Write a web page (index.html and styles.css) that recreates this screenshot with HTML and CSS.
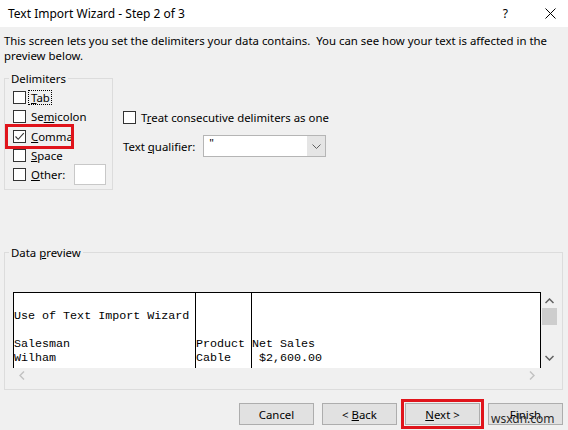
FILE: index.html
```html
<!DOCTYPE html>
<html lang="en">
<head>
    <meta charset="UTF-8">
    <title>Text Import Wizard - Step 2 of 3</title>
    <link rel="stylesheet" href="styles.css">
</head>
<body>

    <!-- Title bar -->
    <header class="titlebar">
        <span class="title">Text Import Wizard - Step 2 of 3</span>
        <div class="title-buttons">
            <span class="help">?</span>
            <svg class="close" width="11" height="11" viewBox="0 0 11 11"><path d="M0.5 0.5 L10.5 10.5 M10.5 0.5 L0.5 10.5" stroke="#000" stroke-width="1" fill="none"/></svg>
        </div>
    </header>

    <div class="dialog">
        <p class="intro">This screen lets you set the delimiters your data contains.&nbsp; You can see how your text is affected in the preview below.</p>

        <div class="top-row">
            <!-- Delimiters group -->
            <fieldset class="delimiters">
                <legend>Delimiters</legend>
                <label class="check-row"><span class="box"></span><span class="focus"><u>T</u>ab</span></label>
                <label class="check-row"><span class="box"></span><span>Se<u>m</u>icolon</span></label>
                <label class="check-row marked"><span class="box"><svg width="11" height="11" viewBox="0 0 11 11"><path d="M1.5 5.5 L4.2 8.3 L9.8 2.2" stroke="#333" stroke-width="1.1" fill="none"/></svg></span><span><u>C</u>omma</span></label>
                <label class="check-row"><span class="box"></span><span><u>S</u>pace</span></label>
                <label class="check-row"><span class="box"></span><span><u>O</u>ther:</span><span class="other-input"></span></label>
            </fieldset>

            <div class="options">
                <label class="check-row"><span class="box"></span><span>T<u>r</u>eat consecutive delimiters as one</span></label>
                <div class="qualifier">
                    <span>Text <u>q</u>ualifier:</span>
                    <div class="combo">
                        <span class="combo-value">"</span>
                        <span class="combo-btn"><svg width="9" height="5" viewBox="0 0 9 5"><path d="M0.5 0.5 L4.5 4.5 L8.5 0.5" stroke="#606060" fill="none"/></svg></span>
                    </div>
                </div>
            </div>
        </div>

        <!-- Data preview group -->
        <fieldset class="preview">
            <legend>Data <u>p</u>review</legend>
            <div class="preview-area">
                <div class="grid">
                    <div class="col col-1">
                        <div class="line"></div>
                        <div class="line">Use of Text Import Wizard</div>
                        <div class="line"></div>
                        <div class="line">Salesman</div>
                        <div class="line">Wilham</div>
                    </div>
                    <div class="col col-2">
                        <div class="line"></div>
                        <div class="line"></div>
                        <div class="line"></div>
                        <div class="line">Product</div>
                        <div class="line">Cable</div>
                    </div>
                    <div class="col col-3">
                        <div class="line"></div>
                        <div class="line"></div>
                        <div class="line"></div>
                        <div class="line">Net Sales</div>
                        <div class="line"> $2,600.00</div>
                    </div>
                </div>
                <div class="vscroll">
                    <svg width="9" height="6" viewBox="0 0 9 6"><path d="M0.5 5 L4.5 1 L8.5 5" stroke="#606060" stroke-width="1.5" fill="none"/></svg>
                    <div class="thumb"></div>
                    <svg class="down" width="9" height="6" viewBox="0 0 9 6"><path d="M0.5 1 L4.5 5 L8.5 1" stroke="#606060" stroke-width="1.5" fill="none"/></svg>
                </div>
            </div>
            <div class="hscroll">
                <svg width="6" height="9" viewBox="0 0 6 9"><path d="M5 0.5 L1 4.5 L5 8.5" stroke="#c2c2c2" stroke-width="1.5" fill="none"/></svg>
                <svg width="6" height="9" viewBox="0 0 6 9"><path d="M1 0.5 L5 4.5 L1 8.5" stroke="#c2c2c2" stroke-width="1.5" fill="none"/></svg>
            </div>
        </fieldset>

        <!-- Buttons -->
        <div class="buttons">
            <button>Cancel</button>
            <button>&lt; <u>B</u>ack</button>
            <button class="marked-btn"><u>N</u>ext &gt;</button>
            <button class="finish">Finish<span class="watermark">wsxdn.com</span></button>
        </div>
    </div>

</body>
</html>
```

FILE: styles.css
```css
body {
    margin: 0;
    width: 568px;
    height: 430px;
    overflow: hidden;
    background-color: #f0f0f0;
    font-family: "Noto Sans", sans-serif;
    font-size: 11.4px;
    color: #000;
}

u {
    text-decoration-thickness: 1px;
    text-underline-offset: 1px;
}

.titlebar {
    height: 27px;
    background-color: #fff;
    display: flex;
    justify-content: space-between;
    align-items: center;
    padding: 0 12px 0 8px;
}

.title {
    font-size: 12px;
}

.title-buttons {
    display: flex;
    align-items: center;
    gap: 37px;
}

.help {
    font-size: 12px;
}

.dialog {
    padding: 0 5px 0 4px;
}

.intro {
    margin: 6px 0 0 0;
    line-height: 15px;
}

.top-row {
    display: flex;
    margin-top: 8px;
}

fieldset {
    border: 1px solid #dcdcdc;
    margin: 0;
}

legend {
    padding: 0 2px;
    margin-left: -4px;
    line-height: 15px;
}

.delimiters {
    width: 109px;
    height: 119px;
    padding: 2px 0 0 8px;
    box-sizing: border-box;
}

.check-row {
    display: flex;
    align-items: center;
    height: 19.3px;
    gap: 5px;
}

.box {
    width: 11px;
    height: 11px;
    border: 1px solid #333;
    background-color: #fff;
    flex-shrink: 0;
    display: flex;
}

.focus {
    outline: 1px dotted #000;
    margin-left: -2px;
    padding: 0 1px 0 2px;
    line-height: 13px;
}

.marked {
    width: 57px;
    outline: 3px solid #e0141b;
    outline-offset: 1px;
    margin-left: -4px;
    padding-left: 4px;
    height: 17.3px;
    margin-top: 1px;
    margin-bottom: 1px;
}

.other-input {
    width: 30px;
    height: 19px;
    background-color: #fff;
    border: 1px solid #c8c8c8;
    margin-left: 4px;
}

.options {
    margin-left: 10px;
    padding-top: 37px;
}

.qualifier {
    display: flex;
    align-items: center;
    gap: 8px;
    margin-top: 8px;
}

.combo {
    width: 121px;
    height: 20px;
    border: 1px solid #b5b5b5;
    background-color: #fff;
    display: flex;
    justify-content: space-between;
}

.combo-value {
    padding-left: 5px;
    line-height: 14px;
    color: #000;
}

.combo-btn {
    width: 18px;
    background-color: #e5e5e5;
    display: flex;
    align-items: center;
    justify-content: center;
}

.preview {
    margin-top: 55px;
    height: 145px;
    box-sizing: border-box;
    padding: 0 4px 0 8px;
}

.preview-area {
    display: flex;
    margin-top: 32px;
}

.grid {
    display: flex;
    border: 1px solid #000;
    border-bottom: none;
    background-color: #fff;
    height: 75px;
    overflow: hidden;
    font-family: "Liberation Mono", monospace;
    font-size: 11.7px;
}

.col {
    border-right: 1px solid #000;
    padding-top: 2px;
}

.col-1 {
    width: 181px;
}

.col-2 {
    width: 55px;
}

.col-3 {
    width: 288px;
    border-right: none;
}

.line {
    height: 14px;
    line-height: 14px;
    white-space: pre;
}

.vscroll {
    width: 17px;
    display: flex;
    flex-direction: column;
    align-items: center;
    padding-top: 6px;
}

.thumb {
    width: 15px;
    height: 17px;
    background-color: #cdcdcd;
    margin-top: 4px;
}

.vscroll .down {
    margin-top: 30px;
}

.hscroll {
    width: 528px;
    height: 15px;
    display: flex;
    justify-content: space-between;
    align-items: center;
    padding: 0 6px;
    box-sizing: border-box;
}

.buttons {
    display: flex;
    justify-content: flex-end;
    gap: 8px;
    margin-top: 13px;
}

button {
    width: 75px;
    height: 22px;
    background-color: #e1e1e1;
    border: 1px solid #adadad;
    font-family: "Noto Sans", sans-serif;
    font-size: 11.4px;
    color: #000;
    padding: 0;
    position: relative;
}

.marked-btn {
    outline: 3px solid #e0141b;
    outline-offset: 1px;
}

.watermark {
    position: absolute;
    left: 2px;
    top: 6px;
    font-size: 12px;
    color: #2a2a2a;
}
```
